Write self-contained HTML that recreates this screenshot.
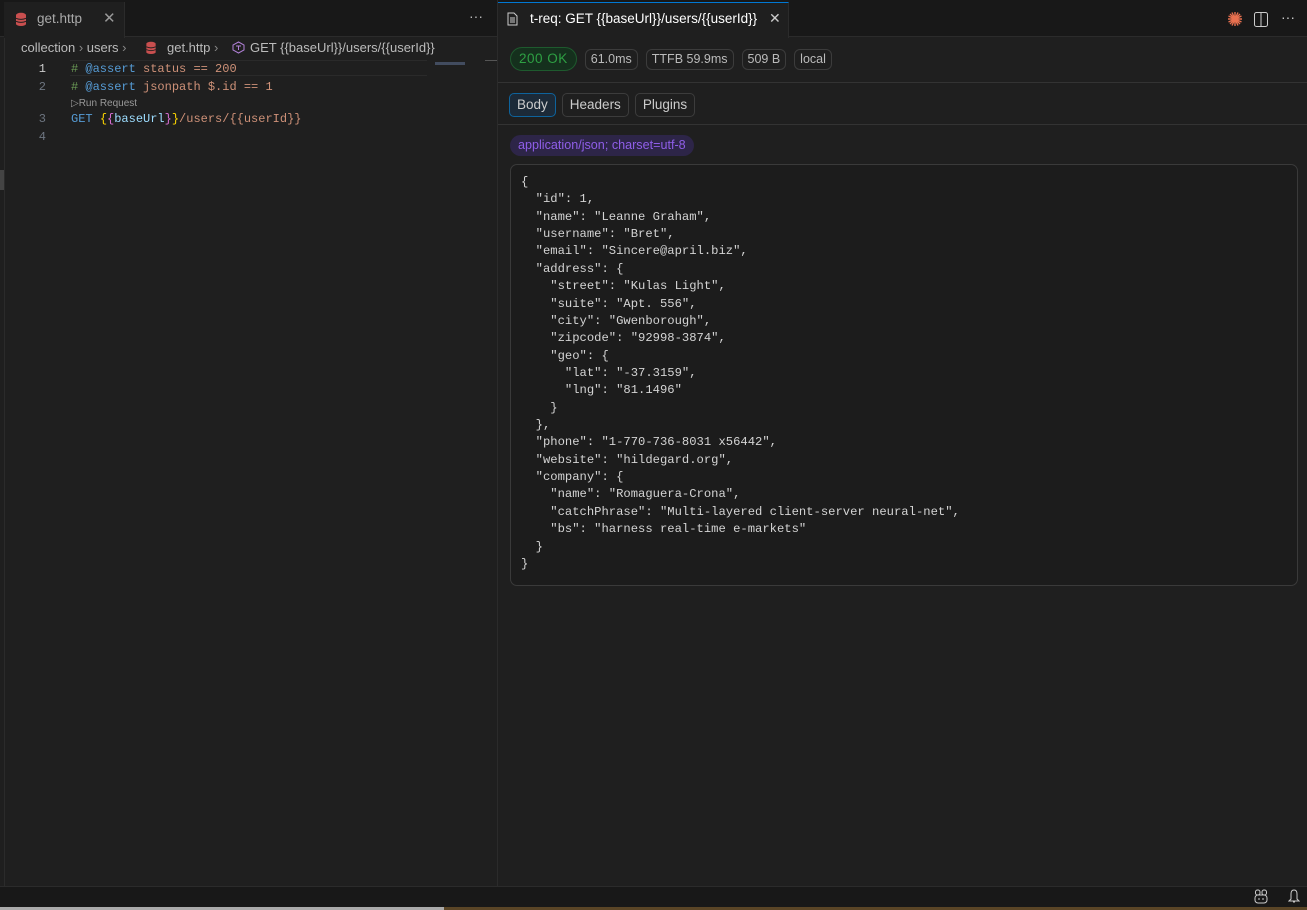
<!DOCTYPE html>
<html><head><meta charset="utf-8"><style>
*{box-sizing:border-box;margin:0;padding:0}
body{width:1307px;height:910px;background:#1f1f1f;font-family:"Liberation Sans",sans-serif;color:#ccc;position:relative;overflow:hidden;font-size:13px}
.abs{position:absolute}
.mono{font-family:"Liberation Mono",monospace}
.tabbar{top:0;height:37px;background:#181818;border-bottom:1px solid #2b2b2b}
.badge{display:inline-block;height:21px;line-height:19px;border:1px solid #3c3c3c;border-radius:6px;padding:0 5px;font-size:12.5px;color:#bbb;margin-right:8px;vertical-align:top}
.btn{display:inline-block;height:24px;line-height:22px;border:1px solid #3c3c3c;border-radius:5px;padding:0 7px;font-size:13.5px;color:#ccc;margin-right:4px}
pre{font-family:"Liberation Mono",monospace}
.cl{white-space:pre;height:18px}
</style></head><body>
<div class="abs" style="left:0;top:0;width:1307px;height:2px;background:#111"></div>
<div class="abs tabbar" style="left:0;width:497px"></div>
<div class="abs" style="left:4px;top:2px;width:121px;height:36px;background:#1f1f1f;border-right:1px solid #2b2b2b"></div>
<svg class="abs" style="left:15px;top:12px" width="12" height="14" viewBox="0 0 12 14"><ellipse cx="6" cy="3" rx="5" ry="2.2" fill="#c94f4f"/><rect x="1" y="3" width="10" height="9" fill="#c94f4f"/><ellipse cx="6" cy="12" rx="5" ry="2" fill="#c94f4f"/><path d="M1 6.3Q6 8.5 11 6.3M1 9.3Q6 11.5 11 9.3" stroke="#1f1f1f" stroke-width="1" fill="none"/></svg>
<div class="abs" style="left:37px;top:11px;font-size:13.5px;color:#aaa">get.http</div>
<div class="abs" style="left:103px;top:9px;font-size:15px;color:#999">✕</div>
<div class="abs" style="left:469px;top:8px;color:#bbb;font-size:14px">···</div>
<div class="abs" style="left:21px;top:40px;font-size:13px;color:#bbb;white-space:nowrap">collection <span style="color:#888">›</span> users <span style="color:#888">›</span></div>
<svg class="abs" style="left:145px;top:41px" width="12" height="13" viewBox="0 0 12 14"><ellipse cx="6" cy="3" rx="5" ry="2.2" fill="#c94f4f"/><rect x="1" y="3" width="10" height="9" fill="#c94f4f"/><ellipse cx="6" cy="12" rx="5" ry="2" fill="#c94f4f"/><path d="M1 6.3Q6 8.5 11 6.3M1 9.3Q6 11.5 11 9.3" stroke="#1f1f1f" stroke-width="1" fill="none"/></svg>
<div class="abs" style="left:167px;top:40px;font-size:13px;color:#bbb;white-space:nowrap">get.http <span style="color:#888">›</span></div>
<svg class="abs" style="left:232px;top:41px" width="13" height="13" viewBox="0 0 13 13"><path d="M6.5 1L12 4v5l-5.5 3L1 9V4z" stroke="#b180d7" fill="none"/><path d="M4 5h5M6.5 5v4" stroke="#b180d7"/></svg>
<div class="abs" style="left:250px;top:40px;font-size:13px;color:#bbb;white-space:nowrap">GET {{baseUrl}}/users/{{userId}}</div>
<div class="abs" style="left:70px;top:60px;width:357px;height:16px;border-top:1px solid #2a2a2a;border-bottom:1px solid #2a2a2a"></div>
<div class="abs mono" style="left:36px;top:60px;font-size:12px;line-height:18px;color:#6e7681;text-align:right;width:10px">
<div style="color:#ccc">1</div><div>2</div><div style="height:14px"></div><div>3</div><div>4</div></div>
<div class="abs mono" style="left:71px;top:60px;font-size:12px;line-height:18px;color:#ce9178;width:360px"><div class="cl"><span style="color:#6a9955">#</span> <span style="color:#569cd6">@assert</span> status == 200</div><div class="cl"><span style="color:#6a9955">#</span> <span style="color:#569cd6">@assert</span> jsonpath $.id == 1</div><div style="height:14px;line-height:16px;font-family:'Liberation Sans',sans-serif;font-size:10px;color:#999;white-space:nowrap">▷Run Request</div><div class="cl"><span style="color:#569cd6">GET</span> <span style="color:#ffd700">{</span><span style="color:#da70d6">{</span><span style="color:#9cdcfe">baseUrl</span><span style="color:#da70d6">}</span><span style="color:#ffd700">}</span>/users/{{userId}}</div></div>
<div class="abs" style="left:435px;top:62px;width:30px;height:3px;background:#5a6a8a;opacity:.6"></div>
<div class="abs" style="left:485px;top:60px;width:12px;height:1px;background:#555"></div>
<div class="abs" style="left:0;top:170px;width:4px;height:20px;background:#444"></div>
<div class="abs" style="left:4px;top:38px;width:1px;height:848px;background:#2b2b2b"></div>
<div class="abs" style="left:497px;top:0;width:1px;height:886px;background:#2b2b2b"></div>
<div class="abs tabbar" style="left:498px;width:809px"></div>
<div class="abs" style="left:498px;top:2px;width:291px;height:36px;background:#1f1f1f;border-top:1px solid #0078d4;border-right:1px solid #2b2b2b"></div>
<svg class="abs" style="left:507px;top:12px" width="11" height="14" viewBox="0 0 11 14"><path d="M1 1h6l3 3v9H1z" stroke="#ccc" fill="none"/><path d="M3 6h5M3 8h5M3 10h5" stroke="#ccc"/></svg>
<div class="abs" style="left:530px;top:11px;font-size:13.5px;color:#fff;white-space:nowrap">t-req: GET {{baseUrl}}/users/{{userId}}</div>
<div class="abs" style="left:769px;top:10px;font-size:14px;color:#ccc">✕</div>
<svg class="abs" style="left:1227px;top:11px" width="16" height="16" viewBox="0 0 16 16"><g stroke="#e8704f" stroke-width="1.4"><path d="M8 1v14M1 8h14M3 3l10 10M13 3L3 13M5 1.5l6 13M11 1.5l-6 13M1.5 5l13 6M1.5 11l13-6"/></g><circle cx="8" cy="8" r="2.5" fill="#e8704f"/></svg>
<svg class="abs" style="left:1254px;top:12px" width="14" height="15" viewBox="0 0 14 15"><rect x="0.5" y="0.5" width="13" height="14" rx="2" stroke="#ccc" fill="none"/><path d="M7 1v13" stroke="#ccc"/></svg>
<div class="abs" style="left:1281px;top:9px;color:#ccc;font-size:14px">···</div>
<div class="abs" style="left:510px;top:47px;white-space:nowrap">
<span class="badge" style="height:24px;line-height:22px;border-radius:12px;border-color:#1e5a2e;background:#15301d;color:#2ea043;font-size:13.5px;padding:0 8px;letter-spacing:.5px;margin-right:8px">200 OK</span><span class="badge" style="margin-top:2px">61.0ms</span><span class="badge" style="margin-top:2px">TTFB 59.9ms</span><span class="badge" style="margin-top:2px">509 B</span><span class="badge" style="margin-top:2px">local</span></div>
<div class="abs" style="left:498px;top:82px;width:809px;height:1px;background:#333"></div>
<div class="abs" style="left:509px;top:93px;white-space:nowrap"><span class="btn" style="border-color:#0e639c;background:#1c2a38">Body</span><span class="btn" style="margin-left:2px">Headers</span><span class="btn" style="margin-left:2px">Plugins</span></div>
<div class="abs" style="left:498px;top:124px;width:809px;height:1px;background:#333"></div>
<div class="abs" style="left:510px;top:135px;height:21px;line-height:21px;padding:0 8px;border-radius:11px;background:#2d2548;color:#8f5ee8;font-size:12.6px;white-space:nowrap">application/json; charset=utf-8</div>
<div class="abs" style="left:510px;top:164px;width:788px;height:422px;border:1px solid #3a3a3a;border-radius:7px;background:#1c1c1c"></div>
<pre class="abs" style="left:521px;top:174px;font-size:12.2px;line-height:17.36px;color:#d4d4d4">{
  "id": 1,
  "name": "Leanne Graham",
  "username": "Bret",
  "email": "Sincere@april.biz",
  "address": {
    "street": "Kulas Light",
    "suite": "Apt. 556",
    "city": "Gwenborough",
    "zipcode": "92998-3874",
    "geo": {
      "lat": "-37.3159",
      "lng": "81.1496"
    }
  },
  "phone": "1-770-736-8031 x56442",
  "website": "hildegard.org",
  "company": {
    "name": "Romaguera-Crona",
    "catchPhrase": "Multi-layered client-server neural-net",
    "bs": "harness real-time e-markets"
  }
}</pre>
<div class="abs" style="left:0;top:886px;width:1307px;height:21px;background:#181818;border-top:1px solid #2b2b2b"></div>
<svg class="abs" style="left:1254px;top:889px" width="14" height="15" viewBox="0 0 14 15"><rect x="1.5" y="1" width="4.5" height="5" rx="2" stroke="#ccc" fill="none"/><rect x="8" y="1" width="4.5" height="5" rx="2" stroke="#ccc" fill="none"/><rect x="1" y="6" width="12" height="8" rx="3" stroke="#ccc" fill="none"/><path d="M5 9v2M9 9v2" stroke="#ccc"/></svg>
<svg class="abs" style="left:1288px;top:889px" width="12" height="15" viewBox="0 0 12 15"><path d="M6 1C3.5 1 3 3 3 5v5l-2 2h10l-2-2V5C9 3 8.5 1 6 1zM5 13h2" stroke="#ccc" fill="none"/></svg>
<div class="abs" style="left:0;top:907px;width:444px;height:3px;background:#aaa"></div>
<div class="abs" style="left:444px;top:907px;width:863px;height:3px;background:#5a4526"></div>
</body></html>
